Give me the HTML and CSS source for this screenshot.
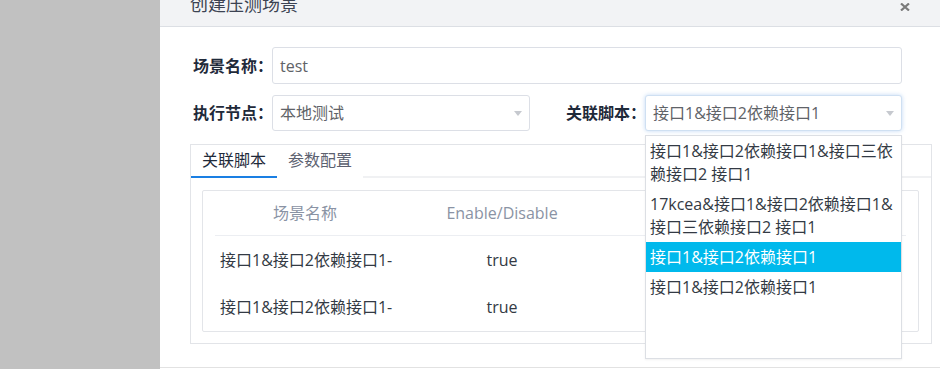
FILE: index.html
```html
<!DOCTYPE html>
<html lang="zh-CN">
<head>
<meta charset="utf-8">
<title>创建压测场景</title>
<link rel="stylesheet" href="styles.css">
</head>
<body>
<div class="backdrop"></div>
<div class="modal">
  <div class="modal-header">
    <span class="modal-title">创建压测场景</span>
    <svg class="close" width="10" height="8" viewBox="0 0 10 8"><path d="M1 0.5 L9 7.5 M9 0.5 L1 7.5" stroke="#7a7a7a" stroke-width="2.2" fill="none"/></svg>
  </div>
  <div class="modal-body">
    <div class="form-row row-name">
      <label class="label">场景名称：</label>
      <div class="input input-wide">test</div>
    </div>
    <div class="form-row row-two">
      <div class="field">
        <label class="label">执行节点：</label>
        <div class="input select select-node"><span>本地测试</span><i class="arrow"></i></div>
      </div>
      <div class="field field-script">
        <label class="label">关联脚本：</label>
        <div class="select-wrap">
          <div class="input select select-script focused"><span>接口1&amp;接口2依赖接口1</span><i class="arrow"></i></div>
          <ul class="dropdown">
            <li>接口1&amp;接口2依赖接口1&amp;接口三依赖接口2 接口1</li>
            <li>17kcea&amp;接口1&amp;接口2依赖接口1&amp;接口三依赖接口2 接口1</li>
            <li class="active">接口1&amp;接口2依赖接口1</li>
            <li>接口1&amp;接口2依赖接口1</li>
          </ul>
        </div>
      </div>
    </div>
    <div class="panel">
      <div class="tabs">
        <div class="tab tab-active">关联脚本</div>
        <div class="tab">参数配置</div>
        <div class="tab-rest"></div>
      </div>
      <div class="panel-content">
        <div class="table-box">
          <div class="trow thead">
            <div class="cell c1 center">场景名称</div>
            <div class="cell c2 center">Enable/Disable</div>
          </div>
          <div class="trow">
            <div class="cell c1">接口1&amp;接口2依赖接口1-</div>
            <div class="cell c2 center">true</div>
          </div>
          <div class="trow">
            <div class="cell c1">接口1&amp;接口2依赖接口1-</div>
            <div class="cell c2 center">true</div>
          </div>
        </div>
      </div>
    </div>
  </div>
  <div class="modal-footer"></div>
</div>
</body>
</html>
```

FILE: styles.css
```css
* { box-sizing: border-box; margin: 0; padding: 0; }
html, body { height: 369px; overflow: hidden; }
body {
  display: flex;
  font-family: "Open Sans", "Noto Sans CJK SC", sans-serif;
  font-size: 16px;
  color: #333;
  background: #fff;
}
.backdrop { width: 160px; flex: none; background: #c1c1c1; }
.modal { flex: 1; background: #fff; height: 369px; display: flex; flex-direction: column; }
.modal-header {
  height: 27px;
  flex: none;
  background: #f2f3f5;
  border-bottom: 1px solid #dcdfe4;
  display: flex;
  align-items: flex-start;
  padding: 0 30px 0 30px;
}
.modal-title {
  font-size: 18px;
  line-height: 18px;
  margin-top: -5px;
  color: #3c4352;
}
.close { margin-left: auto; margin-top: 3px; }
.modal-body {
  height: 340px;
  flex: none;
  padding: 20px 0 0 30px;
}
.modal-footer { border-top: 1px solid #e2e2e2; flex: 1; }
.form-row { display: flex; align-items: center; margin-left: 3px; }
.row-name { height: 37px; }
.row-two { height: 36px; margin-top: 11px; }
.label {
  width: 79px;
  flex: none;
  font-weight: bold;
  color: #1f2a3a;
  font-size: 16px;
  line-height: 20px;
  white-space: nowrap;
}
.input {
  height: 100%;
  border: 1px solid #dcdfe6;
  border-radius: 3px;
  padding-left: 7px;
  display: flex;
  align-items: center;
  color: #5f6368;
  font-size: 16px;
  line-height: 20px;
  background: #fff;
}
.input-wide { width: 630px; }
.field { display: flex; align-items: center; height: 36px; }
.select-node { width: 258px; }
.field-script { margin-left: 36px; }
.select-wrap { position: relative; height: 36px; }
.select-script { width: 257px; }
.select { padding-right: 7px; }
.select span { white-space: nowrap; }
.arrow {
  margin-left: auto;
  width: 0; height: 0;
  border-left: 4.5px solid transparent;
  border-right: 4.5px solid transparent;
  border-top: 5px solid #c6c9cf;
}
.focused {
  border-color: #cfe0f2;
  box-shadow: 0 0 4px rgba(120, 170, 230, 0.45);
}
.dropdown {
  position: absolute;
  left: 0;
  top: 40px;
  width: 257px;
  height: 224px;
  list-style: none;
  background: #fff;
  border: 1px solid #dcdfe4;
  z-index: 10;
  box-shadow: 0 1px 2px rgba(0,0,0,0.06);
}
.dropdown li {
  padding: 3.5px 4px;
  line-height: 23px;
  font-size: 16px;
  color: #333a44;
}
.dropdown li.active { background: #00b9ec; color: #fff; }
.panel {
  width: 742px;
  height: 200px;
  margin-top: 13px;
  border: 1px solid #e2e4e8;
}
.tabs { display: flex; height: 33px; }
.tab {
  padding: 0 11px;
  height: 33px;
  line-height: 31px;
  color: #5c6170;
  border-bottom: 2px solid transparent;
  white-space: nowrap;
}
.tab-active { color: #1f2a3a; border-bottom-color: #1a7fe3; }
.tab-rest { flex: 1; border-bottom: 2px solid #f0f1f3; }
.panel-content { padding: 12px 12px 11px 11px; }
.table-box {
  height: 142px;
  border: 1px solid #e3e5e9;
  border-radius: 2px;
  padding: 0 12px;
}
.trow { display: flex; height: 47px; align-items: center; }
.thead { height: 45px; border-bottom: 1px solid #eceef2; color: #8a93a4; }
.cell { white-space: nowrap; line-height: 20px; }
.c1 { width: 180px; padding-left: 5px; }
.c2 { width: 214px; }
.center { text-align: center; padding-left: 0; }
.trow:not(.thead) .cell { color: #333a44; }
```
